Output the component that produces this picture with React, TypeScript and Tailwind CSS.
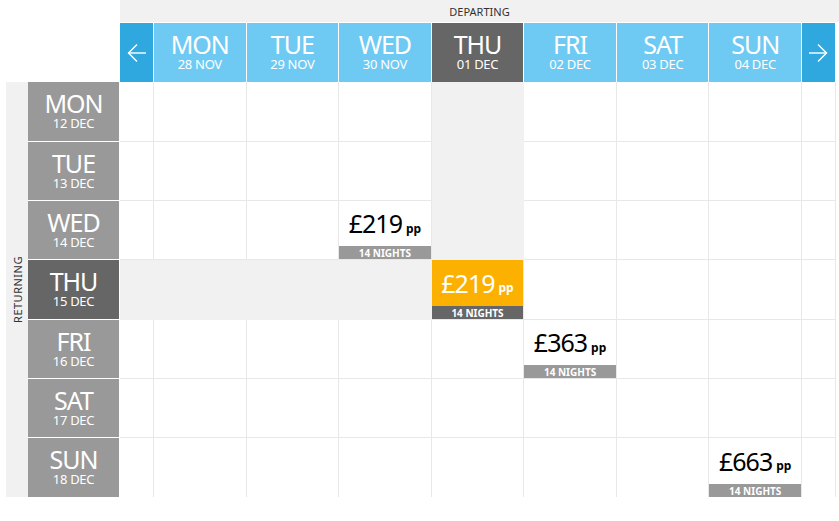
import React from "react";

const cols = [
  { d: "MON", s: "28 NOV" },
  { d: "TUE", s: "29 NOV" },
  { d: "WED", s: "30 NOV" },
  { d: "THU", s: "01 DEC" },
  { d: "FRI", s: "02 DEC" },
  { d: "SAT", s: "03 DEC" },
  { d: "SUN", s: "04 DEC" },
];
const rows = [
  { d: "MON", s: "12 DEC", h: "h-[60px]" },
  { d: "TUE", s: "13 DEC", h: "h-[59px]" },
  { d: "WED", s: "14 DEC", h: "h-[59px]" },
  { d: "THU", s: "15 DEC", h: "h-[60px]" },
  { d: "FRI", s: "16 DEC", h: "h-[59px]" },
  { d: "SAT", s: "17 DEC", h: "h-[59px]" },
  { d: "SUN", s: "18 DEC", h: "h-[59px]" },
];
const prices: Record<string, string> = {
  "2-3": "219",
  "3-4": "219",
  "4-5": "363",
  "6-7": "663",
};

const grid = "grid grid-cols-[34px_repeat(7,minmax(0,1fr))_34px] w-[716px]";
const font = { fontFamily: '"Noto Sans", "Open Sans", sans-serif' };

function Arrow({ dir }: { dir: "l" | "r" }) {
  return (
    <svg width="20" height="20" viewBox="0 0 20 20" fill="none" stroke="white" strokeWidth="1.4">
      {dir === "l" ? (
        <>
          <path d="M19 10H1.5" />
          <path d="M10 1.5L1.5 10l8.5 8.5" />
        </>
      ) : (
        <>
          <path d="M1 10h17.5" />
          <path d="M10 1.5l8.5 8.5-8.5 8.5" />
        </>
      )}
    </svg>
  );
}

function Label({ d, s }: { d: string; s: string }) {
  return (
    <>
      <div className="text-[25px] leading-[25px] tracking-[-1px]">{d}</div>
      <div className="text-[13px] leading-[13px] mt-[1px] tracking-[-0.3px]">{s}</div>
    </>
  );
}

export default function App() {
  return (
    <div className="w-[839px] h-[521px] bg-white overflow-hidden" style={font}>
      {/* top */}
      <div className="flex h-[82px]">
        <div className="w-[120px]" />
        <div className="flex flex-col w-[719px]">
          <div className="h-[23px] bg-[#f1f1f1] border-b border-white flex items-center justify-center text-[11px] text-[#333] leading-none pt-[1px]">
            DEPARTING
          </div>
          <div className={grid + " h-[59px]"}>
            <div className="bg-[#2ea8df] border-r border-white flex items-center justify-center">
              <Arrow dir="l" />
            </div>
            {cols.map((c, i) => (
              <div
                key={c.d}
                className={
                  (i === 3 ? "bg-[#666666]" : "bg-[#6fcaf3]") +
                  " border-r border-white flex flex-col items-center text-white pt-[9px]"
                }
              >
                <Label d={c.d} s={c.s} />
              </div>
            ))}
            <div className="bg-[#2ea8df] border-r border-white flex items-center justify-center">
              <Arrow dir="r" />
            </div>
          </div>
        </div>
      </div>
      {/* body */}
      <div className="flex">
        <div className="w-[6px]" />
        <div className="w-[22px] h-[415px] bg-[#f1f1f1] flex items-center justify-center">
          <div className="-rotate-90 text-[11px] text-[#333] tracking-[0.5px] whitespace-nowrap leading-none">
            RETURNING
          </div>
        </div>
        <div className="flex flex-col w-[92px]">
          {rows.map((r, i) => (
            <div
              key={r.d}
              className={
                r.h +
                (i < 6 ? " border-b" : "") +
                " border-r border-white flex flex-col items-center text-white pt-[9px] " +
                (i === 3 ? "bg-[#666666]" : "bg-[#999999]")
              }
            >
              <Label d={r.d} s={r.s} />
            </div>
          ))}
        </div>
        <div className="flex flex-col">
          {rows.map((r, ri) => (
            <div key={r.d} className={grid + " " + r.h}>
              {Array.from({ length: 9 }).map((_, ci) => {
                const hl = (ri === 3 && ci <= 3) || (ci === 4 && ri < 3);
                const sel = ri === 3 && ci === 4;
                const price = prices[ri + "-" + ci];
                const cls =
                  "border-r " +
                  (ri < 6 ? "border-b " : "") +
                  (hl
                    ? "bg-[#f1f1f1] border-[#f1f1f1] "
                    : sel
                    ? "bg-[#fcb000] border-[#e8e8e8] "
                    : "bg-white border-[#e8e8e8] ") +
                  "flex flex-col";
                return (
                  <div key={ci} className={cls}>
                    {price && (
                      <>
                        <div
                          className={
                            "flex-1 flex items-center justify-center " +
                            (sel ? "text-white" : "text-black")
                          }
                        >
                          <span className="text-[25px] leading-none tracking-[-1px]">£{price}</span>
                          <span className="text-[12px] font-bold ml-[4px] mt-[10px] leading-none">pp</span>
                        </div>
                        <div
                          className={
                            "h-[13px] flex items-center justify-center text-white text-[10px] font-bold leading-none " +
                            (sel ? "bg-[#666666]" : "bg-[#999999]")
                          }
                        >
                          14 NIGHTS
                        </div>
                      </>
                    )}
                  </div>
                );
              })}
            </div>
          ))}
        </div>
      </div>
    </div>
  );
}
